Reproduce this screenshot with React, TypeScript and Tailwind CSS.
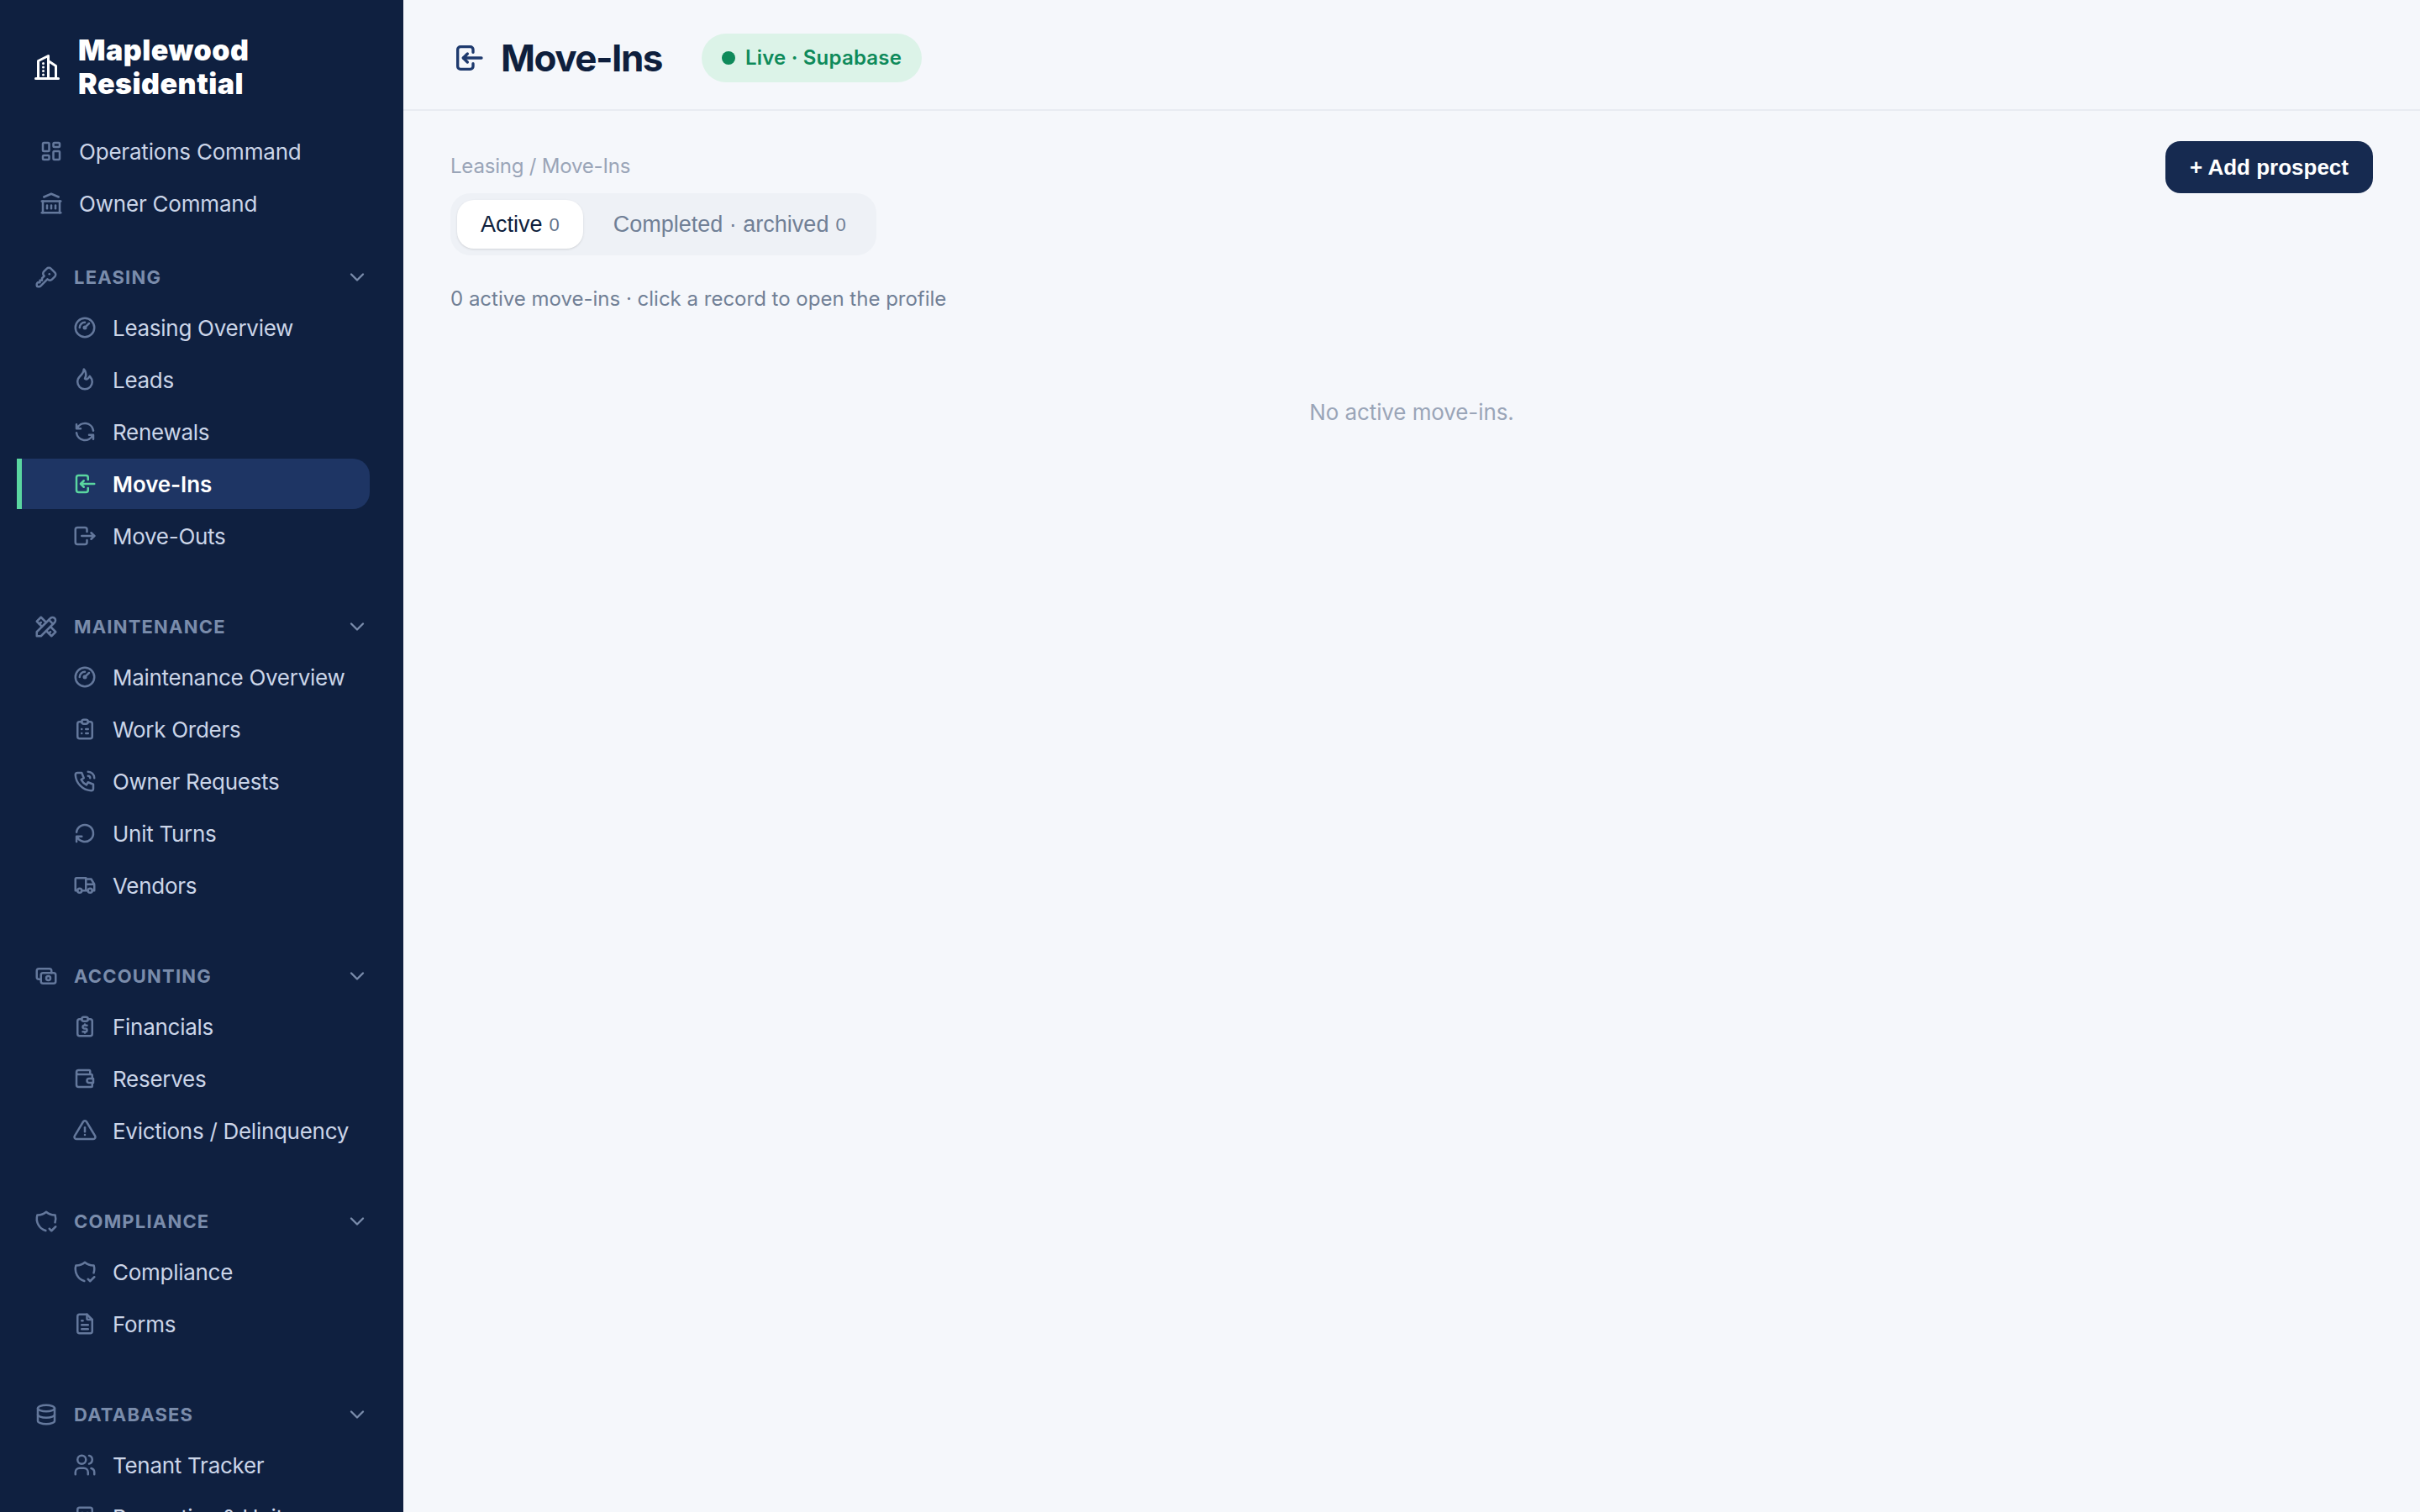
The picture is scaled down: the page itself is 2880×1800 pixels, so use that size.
import type { ComponentType } from "react";
import {
  TbAlertTriangle,
  TbBuilding,
  TbBuildingBank,
  TbBuildingSkyscraper,
  TbCash,
  TbChevronDown,
  TbClipboardList,
  TbDatabase,
  TbFileText,
  TbFlame,
  TbGauge,
  TbKey,
  TbLayoutDashboard,
  TbLogin,
  TbLogout,
  TbPhoneCall,
  TbRefresh,
  TbReportMoney,
  TbRotateClockwise,
  TbShieldCheck,
  TbTools,
  TbTruck,
  TbUsers,
  TbWallet,
} from "react-icons/tb";

type IconType = ComponentType<{ size?: number; className?: string }>;

type NavItem = { label: string; icon: IconType; active?: boolean };
type NavGroup = { title: string; icon: IconType; items: NavItem[] };

const groups: NavGroup[] = [
  {
    title: "LEASING",
    icon: TbKey,
    items: [
      { label: "Leasing Overview", icon: TbGauge },
      { label: "Leads", icon: TbFlame },
      { label: "Renewals", icon: TbRefresh },
      { label: "Move-Ins", icon: TbLogin, active: true },
      { label: "Move-Outs", icon: TbLogout },
    ],
  },
  {
    title: "MAINTENANCE",
    icon: TbTools,
    items: [
      { label: "Maintenance Overview", icon: TbGauge },
      { label: "Work Orders", icon: TbClipboardList },
      { label: "Owner Requests", icon: TbPhoneCall },
      { label: "Unit Turns", icon: TbRotateClockwise },
      { label: "Vendors", icon: TbTruck },
    ],
  },
  {
    title: "ACCOUNTING",
    icon: TbCash,
    items: [
      { label: "Financials", icon: TbReportMoney },
      { label: "Reserves", icon: TbWallet },
      { label: "Evictions / Delinquency", icon: TbAlertTriangle },
    ],
  },
  {
    title: "COMPLIANCE",
    icon: TbShieldCheck,
    items: [
      { label: "Compliance", icon: TbShieldCheck },
      { label: "Forms", icon: TbFileText },
    ],
  },
  {
    title: "DATABASES",
    icon: TbDatabase,
    items: [
      { label: "Tenant Tracker", icon: TbUsers },
      { label: "Properties & Units", icon: TbBuilding },
    ],
  },
];

function SubItem({ item }: { item: NavItem }) {
  const Icon = item.icon;
  if (item.active) {
    return (
      <div className="flex h-[60px] items-center gap-[18px] rounded-r-[20px] border-l-[6px] border-[#5ad6a0] bg-[#1e3564] pl-[60px] text-[26px] font-semibold tracking-[-0.1px] text-white">
        <Icon size={30} className="shrink-0 text-[#5ad6a0]" />
        <span>{item.label}</span>
      </div>
    );
  }
  return (
    <div className="flex h-[60px] items-center gap-[18px] pl-[66px] text-[26px] tracking-[-0.28px] text-[#cbd5e8]">
      <Icon size={30} className="shrink-0 text-[#64789c]" />
      <span>{item.label}</span>
    </div>
  );
}

export default function App() {
  return (
    <div className="flex h-[1800px] w-[2880px] overflow-hidden bg-[#f5f7fb] font-['Inter',sans-serif]">
      <aside className="h-full w-[480px] shrink-0 overflow-hidden bg-[#0f2040]">
        {/* brand */}
        <div className="flex h-[150px] items-center gap-[19px] pt-[10px] pl-[38px] text-white">
          <TbBuildingSkyscraper size={36} className="shrink-0" />
          <div className="text-[34px] leading-[40px] font-black tracking-[0.5px]">
            Maplewood
            <br />
            Residential
          </div>
        </div>

        <div className="flex flex-col gap-[2px] pr-10 pl-5">
          <div className="flex h-[60px] items-center gap-[18px] pl-[26px] text-[26px] tracking-[-0.2px] text-[#cbd5e8]">
            <TbLayoutDashboard size={30} className="shrink-0 text-[#64789c]" />
            <span>Operations Command</span>
          </div>
          <div className="flex h-[60px] items-center gap-[18px] pl-[26px] text-[26px] tracking-[-0.2px] text-[#cbd5e8]">
            <TbBuildingBank size={30} className="shrink-0 text-[#64789c]" />
            <span>Owner Command</span>
          </div>
        </div>

        <div className="mt-[38px] pr-10 pl-5">
          {groups.map((group) => {
            const GroupIcon = group.icon;
            return (
              <div key={group.title} className="mb-[58px]">
                <div className="mb-[10px] flex h-10 items-center pr-[1px] pl-5">
                  <GroupIcon size={30} className="shrink-0 text-[#64789c]" />
                  <span className="ml-[18px] flex-1 text-[22px] font-bold tracking-[1.2px] text-[#7a8cab]">
                    {group.title}
                  </span>
                  <TbChevronDown size={28} className="shrink-0 text-[#7a8cab]" />
                </div>
                <div className="flex flex-col gap-[2px]">
                  {group.items.map((item) => (
                    <SubItem key={item.label} item={item} />
                  ))}
                </div>
              </div>
            );
          })}
        </div>
      </aside>

      <main className="flex-1">
        <header className="flex h-[132px] items-center border-b-2 border-[#e8ebf2] pt-2 pl-[58px]">
          <TbLogin size={40} className="text-[#1e3a6e]" />
          <h1 className="ml-[18px] text-[44px] font-bold tracking-[-1.5px] text-[#0f1f3d]">Move-Ins</h1>
          <div className="ml-[47px] flex h-[58px] items-center gap-3 rounded-full bg-[#dcf3e8] px-6 text-[24px] font-semibold tracking-[0.2px] text-[#0e8a5a]">
            <span className="size-4 rounded-full bg-[#0e8a5a]" />
            Live · Supabase
          </div>
        </header>

        <div className="px-14 pt-9">
          <div className="flex items-start justify-between">
            <div>
              <div className="pt-[11px] text-[24px] leading-[38px] tracking-[-0.2px] text-[#9aa5b8]">
                Leasing / Move-Ins
              </div>
              <div className="mt-[13px] flex h-[74px] w-fit items-center gap-2 rounded-[24px] bg-[#eef1f6] p-2 font-['Liberation_Sans',sans-serif]">
                <button className="flex h-[58px] items-center gap-2 rounded-[20px] bg-white px-7 text-[27px] text-[#0f1f3d] shadow-sm">
                  Active <span className="text-[22px] text-[#64748b]">0</span>
                </button>
                <button className="flex h-[58px] items-center gap-2 rounded-[20px] px-7 text-[27px] text-[#718096]">
                  Completed · archived <span className="text-[22px]">0</span>
                </button>
              </div>
            </div>
            <button className="h-[62px] rounded-[18px] bg-[#162a50] px-[29px] font-['Liberation_Sans',sans-serif] text-[26px] font-bold text-white">
              + Add prospect
            </button>
          </div>

          <p className="mt-[33px] text-[24px] leading-[38px] text-[#718096]">
            0 active move-ins · click a record to open the profile
          </p>
          <p className="mt-24 text-center text-[26px] leading-10 tracking-[-0.1px] text-[#9aa5b8]">
            No active move-ins.
          </p>
        </div>
      </main>
    </div>
  );
}
